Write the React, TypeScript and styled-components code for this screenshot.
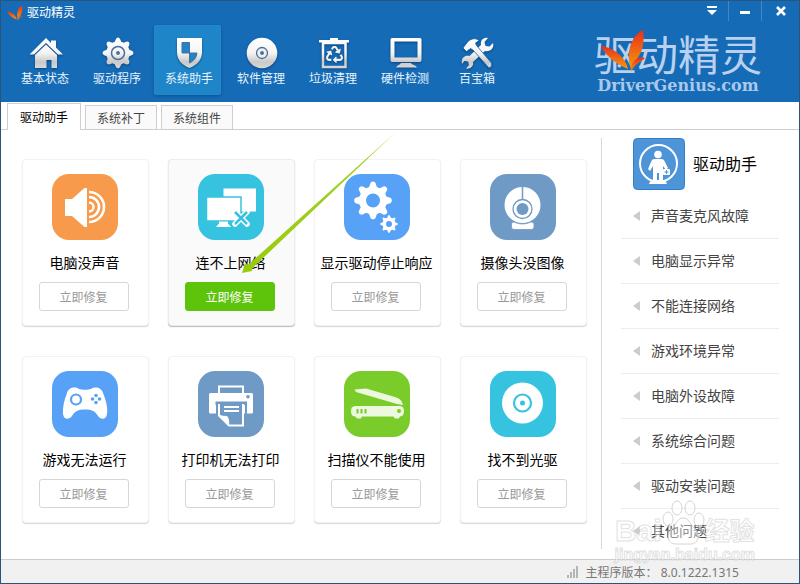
import React, { ReactNode, useState } from "react";
import styled, { createGlobalStyle } from "styled-components";
import { FaRecycle } from "react-icons/fa";

const GlobalStyle = createGlobalStyle`
  * { box-sizing: border-box; }
  body {
    margin: 0;
    font-family: "Noto Sans", "Noto Sans CJK SC", sans-serif;
    font-size: 12px;
    color: #000;
    background: #fff;
  }
  button { font: inherit; border: 0; padding: 0; background: none; cursor: pointer; }
`;

const AppWindow = styled.div`
  position: relative;
  display: flex;
  flex-direction: column;
  min-height: 100vh;
  border: 1px solid #2b5578;
  background: #fff;
`;

/* ---------- header ---------- */

const Header = styled.header`
  background: #156bb6;
  padding-bottom: 7px;
`;

const TitleBar = styled.div`
  display: flex;
  align-items: center;
  justify-content: space-between;
  height: 24px;
  padding-left: 6px;
`;

const AppTitle = styled.h1`
  display: flex;
  align-items: center;
  gap: 4px;
  margin: 0;
  font-size: 12px;
  line-height: 20px;
  font-weight: 400;
  color: #fff;
`;

const WindowControls = styled.div`
  display: flex;
  align-self: flex-start;
`;

const WindowButton = styled.button`
  display: flex;
  align-items: center;
  justify-content: center;
  width: 33px;
  height: 20px;

  & + & { border-left: 1px solid #4388c5; }
  &:last-child { width: 38px; }
`;

const HeaderBody = styled.div`
  display: flex;
  justify-content: space-between;
  padding: 0 37px 0 9px;
`;

const Nav = styled.nav`
  display: flex;
  gap: 5px;
`;

const NavButton = styled.button<{ $active: boolean }>`
  display: flex;
  flex-direction: column;
  align-items: center;
  width: 67px;
  height: 70px;
  padding: 11px 0 0 3px;
  border-radius: 3px;
  color: #e8f3fc;
  line-height: 18px;
  background: ${(p) => (p.$active ? "#1e85c9" : "transparent")};
  box-shadow: ${(p) => (p.$active ? "0 1px 3px rgba(0, 40, 90, 0.4), inset 0 0 1px #4aa6dd" : "none")};
`;

const NavIcon = styled.svg`
  width: 34px;
  height: 34px;
  overflow: visible;
  filter: drop-shadow(0 1px 1px rgba(0, 30, 70, 0.5));
`;

const Brand = styled.div`
  position: relative;
  display: flex;
  flex-direction: column;
  align-items: center;
  padding-top: 8px;
`;

const BrandName = styled.div`
  font-size: 42px;
  line-height: 44px;
  font-weight: 400;
  color: #b9d1ef;
`;

const BrandSite = styled.div`
  font-family: "DejaVu Serif", serif;
  font-size: 16px;
  line-height: 18px;
  font-weight: 700;
  color: #a9c8eb;
`;

const BrandLeaf = styled.div`
  position: absolute;
  left: 7px;
  top: 5px;
  line-height: 0;
`;

/* ---------- tabs ---------- */

const TabBar = styled.div`
  display: flex;
  align-items: flex-end;
  gap: 4px;
  padding: 1px 6px 0;
  border-bottom: 1px solid #cfcfcf;
`;

const Tab = styled.button<{ $active: boolean }>`
  height: ${(p) => (p.$active ? "27px" : "24px")};
  margin-bottom: ${(p) => (p.$active ? "-1px" : "0")};
  padding: 0 ${(p) => (p.$active ? "12px" : "11px")};
  border: 1px solid #cfcfcf;
  border-bottom: 0;
  background: ${(p) => (p.$active ? "#fff" : "#fafafa")};
  color: ${(p) => (p.$active ? "#000" : "#444")};
`;

/* ---------- content ---------- */

const Content = styled.main`
  display: flex;
  flex: 1;
`;

const CardGrid = styled.section`
  display: grid;
  flex: 1;
  grid-template-columns: repeat(4, 1fr);
  align-content: start;
  gap: 30px 19px;
  padding: 29px 14px 30px 21px;
`;

const Card = styled.article<{ $hot?: boolean }>`
  display: flex;
  flex-direction: column;
  align-items: center;
  padding: 14px 2px 14px 0;
  border: 1px solid ${(p) => (p.$hot ? "#ececec" : "#f2f2f2")};
  border-radius: 4px;
  background: ${(p) => (p.$hot ? "#fafafa" : "#fff")};
  box-shadow: 0 1px 1px ${(p) => (p.$hot ? "rgba(0, 0, 0, 0.28)" : "rgba(0, 0, 0, 0.16)")};
`;

const CardTitle = styled.h2`
  margin: 12px 0 8px;
  font-size: 14px;
  line-height: 22px;
  font-weight: 400;
  white-space: nowrap;
`;

const RepairButton = styled.button<{ $hot?: boolean }>`
  width: 90px;
  height: 29px;
  margin-right: 2px;
  border: 1px solid ${(p) => (p.$hot ? "#5dc40b" : "#d6d6d6")};
  border-radius: 3px;
  background: ${(p) => (p.$hot ? "#5dc40b" : "#fff")};
  color: ${(p) => (p.$hot ? "#fff" : "#999")};
`;

const Sidebar = styled.aside`
  width: 198px;
  margin: 8px 0 10px;
  padding: 0 20px 0 19px;
  border-left: 1px solid #d9d9d9;
`;

const SidebarHeader = styled.div`
  display: flex;
  align-items: center;
  gap: 8px;
  padding: 0 0 4px 12px;
`;

const SidebarTitle = styled.h2`
  margin: 0;
  font-size: 16px;
  line-height: 24px;
  font-weight: 400;
`;

const TopicList = styled.ul`
  margin: 0;
  padding: 0;
  list-style: none;
`;

const Topic = styled.li`
  padding: 12px 0 12px 12px;
  border-bottom: 1px solid #e9eef3;

  &:last-child { border-bottom: 0; padding-bottom: 6px; }
`;

const TopicLink = styled.a`
  display: flex;
  align-items: center;
  gap: 11px;
  font-size: 14px;
  line-height: 20px;
  color: #444;
  text-decoration: none;
`;

/* ---------- status bar and overlays ---------- */

const StatusBar = styled.footer`
  display: flex;
  align-items: center;
  justify-content: flex-end;
  gap: 8px;
  height: 24px;
  padding-right: 60px;
  border-top: 1px solid #ccc;
  background: #f1f1f1;
  color: #777;
`;

const Pointer = styled.svg`
  position: absolute;
  left: 239px;
  top: 129px;
  width: 158px;
  height: 144px;
  pointer-events: none;
`;

const Watermark = styled.div`
  position: absolute;
  right: 44px;
  bottom: 19px;
  color: rgba(255, 255, 255, 0.5);
  font-family: "Liberation Sans", "Noto Sans CJK SC", sans-serif;
  font-weight: 700;
  -webkit-text-stroke: 1px rgba(195, 195, 195, 0.5);
  pointer-events: none;
`;

const WatermarkLogo = styled.div`
  display: flex;
  align-items: center;
  justify-content: center;
  font-size: 30px;
  line-height: 30px;
`;

const WatermarkProduct = styled.span`
  font-size: 25px;
`;

const WatermarkPaw = styled.svg`
  width: 43px;
  height: 48px;
  margin-top: -18px;
`;

const WatermarkSite = styled.div`
  font-size: 16px;
  line-height: 18px;
  text-align: center;
`;

/* ---------- drawings ---------- */

function gearPath(cx: number, cy: number, outer: number, inner: number, teeth: number, hole = 0) {
  const step = (Math.PI * 2) / teeth;
  const at = (r: number, a: number) =>
    `${(cx + r * Math.sin(a)).toFixed(2)} ${(cy - r * Math.cos(a)).toFixed(2)}`;
  let d = "";
  for (let i = 0; i < teeth; i++) {
    const a = i * step;
    d += `${i ? "L" : "M"}${at(inner, a - step * 0.36)} L${at(outer - 1, a - step * 0.17)} Q${at(outer + 1, a)} ${at(outer - 1, a + step * 0.17)} L${at(inner, a + step * 0.36)} `;
  }
  d += "Z";
  if (hole) {
    d += ` M${cx - hole} ${cy} a${hole} ${hole} 0 1 0 ${hole * 2} 0 a${hole} ${hole} 0 1 0 ${-hole * 2} 0 Z`;
  }
  return d;
}

const Leaf = ({ id, width, height }: { id: string; width: number; height: number }) => (
  <svg width={width} height={height} viewBox="0 0 44 42" aria-hidden="true">
    <defs>
      <linearGradient id={id} x1="0" y1="0" x2="0" y2="1">
        <stop offset="0" stopColor="#e8301c" />
        <stop offset="1" stopColor="#f59a0c" />
      </linearGradient>
    </defs>
    <g fill={`url(#${id})`}>
      <path d="M0 16 C10 17 24 25 27 39 C17 35 5 27 0 16Z" />
      <path d="M42 0 C44 14 41 24 34 31 C32 33 31 36 30 39 C25 25 29 6 42 0Z" />
      <path d="M44 28 C37 26 29 31 30 42 C34 33 39 33 44 28Z" />
    </g>
  </svg>
);

const STEEL = "url(#steel)";
const NAVY = "#4a7099";

const SteelGradient = () => (
  <defs>
    <linearGradient id="steel" gradientUnits="userSpaceOnUse" x1="0" y1="2" x2="0" y2="32">
      <stop offset="0" stopColor="#fff" />
      <stop offset="0.5" stopColor="#f4f4f4" />
      <stop offset="0.8" stopColor="#c9c9c9" />
      <stop offset="1" stopColor="#d9d9d9" />
    </linearGradient>
  </defs>
);

const navItems: { label: string; icon: ReactNode }[] = [
  {
    label: "基本状态",
    icon: (
      <g fill={STEEL}>
        <path d="M18 2 L23 7 V4.5 H28 V11.5 L35 18.5 H30 L18 7 L6 18.5 H1.5Z" />
        <path d="M18 8.5 L29 19 V32 H23.5 V24 H18.5 V32 H7 V19Z" />
      </g>
    ),
  },
  {
    label: "驱动程序",
    icon: (
      <>
        <path d={gearPath(18, 17, 15.5, 11.8, 8)} fill={STEEL} />
        <circle cx="18" cy="17" r="6.5" fill="none" stroke={NAVY} strokeWidth="1.5" />
        <circle cx="18" cy="17" r="2.5" fill={NAVY} stroke="#fff" />
      </>
    ),
  },
  {
    label: "系统助手",
    icon: (
      <>
        <path d="M5 2 H30 V16 C30 24 25 29 17.5 32 C10 29 5 24 5 16Z" fill={STEEL} />
        <path
          d="M10 6.5 H17.5 V17 H10Z M17.5 17 H25 C24.5 22 21.5 25 17.5 27Z"
          fill="#1e85c9"
          stroke={NAVY}
          strokeWidth="1"
        />
      </>
    ),
  },
  {
    label: "软件管理",
    icon: (
      <>
        <circle cx="18" cy="17" r="15.3" fill={STEEL} />
        <circle cx="18" cy="17" r="5.5" fill="#eee" stroke={NAVY} strokeWidth="1.3" />
        <circle cx="18" cy="17" r="2.5" fill={NAVY} stroke="#fff" />
      </>
    ),
  },
  {
    label: "垃圾清理",
    icon: (
      <>
        <path d="M3 4 H14 V2 H22 V4 H33 V6.5 H3Z" fill={STEEL} />
        <path d="M7 7 H29.5 V31 H7Z" fill="none" stroke={STEEL} strokeWidth="2.5" />
        <FaRecycle x="10" y="10" size={17} color="#f0f0f0" />
      </>
    ),
  },
  {
    label: "硬件检测",
    icon: (
      <g fill={STEEL}>
        <path
          fillRule="evenodd"
          d="M4 2 H32 Q33.5 2 33.5 3.5 V24 Q33.5 26 32 26 H4 Q2.5 26 2.5 24 V3.5 Q2.5 2 4 2Z M6.5 5.5 V21.5 H29.5 V5.5Z"
        />
        <path d="M13 27 H23 C24 29 28 29 29 31.5 H8 C9 29 12 29 13 27Z" />
      </g>
    ),
  },
  {
    label: "百宝箱",
    icon: (
      <g fill={STEEL}>
        <path d="M28 2 L24.5 6 L25.500 10 L29.500 10.500 L33 7 C34.500 12.500 30 16 25 15 L13 26 C14 30.500 10 33.500 6 32.500 L9 29 L8 25.500 L4.500 25 L2 28 C0.500 22 5 18.500 9.500 20 L21 9 C20 4 24 1 28 2Z" />
        <path d="M3 12 L8 5.500 C12 2 16 2 19 4.500 L15.500 7 L16.500 9.500 L31.500 27 Q33 30.500 29 32 L13 14 L10.500 12.500 L6.500 15.500Z" stroke="#156bb6" strokeWidth="0.800" />
      </g>
    ),
  },
];

const cards: { title: string; color: string; art: ReactNode; hot?: boolean }[] = [
  {
    title: "电脑没声音",
    color: "#f79a4b",
    art: (
      <>
        <path d="M13 25 H20 L32.500 14 H35 V53 H32.500 L20 42 H13Z" fill="#fff" />
        <g fill="none" stroke="#fff" strokeWidth="2.600">
          <path d="M37 28.500 A4.500 4.500 0 0 1 37 37.500" />
          <path d="M37 23 A10 10 0 0 1 37 43" />
          <path d="M37 18 A15 15 0 0 1 37 48" />
        </g>
      </>
    ),
  },
  {
    title: "连不上网络",
    color: "#36c3e0",
    hot: true,
    art: (
      <>
        <path d="M25.500 14.500 H58 V37.500 H25.500Z" fill="#fff" />
        <path d="M8.500 23 H43 V47 H8.500Z" fill="#fff" stroke="#36c3e0" strokeWidth="1.500" />
        <path d="M21 47.500 H30 V49.500 L33 53 H18 L21 49.500Z" fill="#fff" />
        <path d="M37 38 L49 50 M49 38 L37 50" stroke="#fff" strokeWidth="5.500" strokeLinecap="round" />
        <path d="M37 38 L49 50 M49 38 L37 50" stroke="#36c3e0" strokeWidth="2.500" />
      </>
    ),
  },
  {
    title: "显示驱动停止响应",
    color: "#57a1f6",
    art: (
      <g fill="#fff" fillRule="evenodd">
        <path d={gearPath(29, 26.5, 19, 14, 8, 7)} />
        <path d={gearPath(45, 50, 9, 6.5, 8, 3)} />
      </g>
    ),
  },
  {
    title: "摄像头没图像",
    color: "#6f9ac5",
    art: (
      <>
        <circle cx="32.500" cy="31" r="18" fill="#fff" />
        <path d="M21.500 50 Q21.500 48 24 48 Q32.500 52 41 48 Q44 48 44 50 V53 Q44 55.500 41 55.500 H24 Q21.500 55.500 21.500 53Z" fill="#fff" stroke="#6f9ac5" strokeWidth="0.800" />
        <path d="M32.500 12 V25" stroke="#6f9ac5" strokeWidth="1.500" />
        <circle cx="32.500" cy="35" r="9.500" fill="#fff" stroke="#6f9ac5" strokeWidth="1.300" />
        <circle cx="32.500" cy="35" r="6" fill="#6f9ac5" />
      </>
    ),
  },
  {
    title: "游戏无法运行",
    color: "#57a1f6",
    art: (
      <>
        <path
          d="M15 22 C17 16 23 15.500 27 18 C30 19 36 19 39 18 C43 15.500 49 16 51 22 C54 29 56 37 55 43 C54 49 49 49 46 45 C43 40 40 38.500 33 38.500 C26 38.500 23 40 20 45 C17 49 12 49 11 43 C10.500 37 12 29 15 22Z"
          fill="#fff"
        />
        <circle cx="24" cy="28.500" r="5" fill="none" stroke="#57a1f6" strokeWidth="2.200" />
        <g fill="#57a1f6">
          <circle cx="44" cy="24.500" r="1.800" />
          <circle cx="44" cy="31.500" r="1.800" />
          <circle cx="40.500" cy="28" r="1.800" />
          <circle cx="47.500" cy="28" r="1.800" />
        </g>
      </>
    ),
  },
  {
    title: "打印机无法打印",
    color: "#6f9ac5",
    art: (
      <>
        <path d="M21 23 V15.500 H45 V23" fill="none" stroke="#fff" strokeWidth="2" />
        <rect x="11" y="22" width="44" height="20.500" rx="1.500" fill="#fff" />
        <circle cx="50" cy="25.800" r="1.800" fill="#6f9ac5" />
        <path d="M17.500 30.500 H49 V34 H17.500Z M18 34 H20 V43 H18Z M47 34 H49 V43 H47Z" fill="#6f9ac5" />
        <path d="M21 34 H45 V54.500 H31 L21 44.500Z" fill="#6f9ac5" stroke="#fff" strokeWidth="2" />
        <path d="M22 32 H44 V35 H22Z" fill="#6f9ac5" />
        <path d="M20 43.500 L31 55.500 Q32 48 29 45 Q25 45 20 43.500Z" fill="#fff" />
        <path d="M26 36 H41 M26 40 H41" stroke="#fff" strokeWidth="2" />
      </>
    ),
  },
  {
    title: "扫描仪不能使用",
    color: "#79cc2a",
    art: (
      <>
        <g fill="#ecf9de">
          <path d="M10.500 18.500 L22 17.500 L51 26 Q58 28 59 34 L53 33 L12 21Z" />
          <rect x="7" y="35" width="53" height="10.500" rx="4.500" />
          <path d="M11 45 H18 L17 47.500 H13Z M49 45 H56 L55 47.500 H51Z" />
        </g>
        <path d="M13.500 38 V42.500 M17.500 38 V42.500 M21.500 38 V42.500" stroke="#79cc2a" strokeWidth="2" />
        <circle cx="55" cy="40" r="2" fill="#79cc2a" />
      </>
    ),
  },
  {
    title: "找不到光驱",
    color: "#36c3e0",
    art: (
      <>
        <circle cx="32.500" cy="32" r="20.500" fill="#fff" />
        <circle cx="32.500" cy="32" r="8.500" fill="none" stroke="#36c3e0" strokeWidth="2.200" />
        <circle cx="32.500" cy="32" r="2.500" fill="#36c3e0" />
      </>
    ),
  },
];

const tabs = ["驱动助手", "系统补丁", "系统组件"];

const topics = [
  "声音麦克风故障",
  "电脑显示异常",
  "不能连接网络",
  "游戏环境异常",
  "电脑外设故障",
  "系统综合问题",
  "驱动安装问题",
  "其他问题",
];

const AssistantBadge = () => (
  <svg width="52" height="52" viewBox="0 0 52 52" aria-hidden="true">
    <rect x="0.500" y="0.500" width="51" height="51" rx="4" fill="#4d94d9" stroke="#2f7fcb" />
    <circle cx="25.500" cy="25.500" r="18.500" fill="none" stroke="#fff" strokeWidth="2" />
    <g fill="#fff">
      <circle cx="25" cy="16.500" r="3.800" />
      <path d="M21 21 H29 Q31 21 32 24 L35 30 L33 32 L30 28 V44 H26 V35 H24 V44 H20 V28 L17 33 L15 31 L18 24 Q19 21 21 21Z" />
      <path d="M16 46 Q17 42 21 42 H29 Q33 42 34 46Z" />
      <rect x="30" y="31" width="7" height="6" rx="1" />
    </g>
    <path d="M33.500 32 V36 M31.500 34 H35.500" stroke="#4d94d9" strokeWidth="1" />
  </svg>
);

export default function App() {
  const [activeNav, setActiveNav] = useState("系统助手");
  const [activeTab, setActiveTab] = useState(tabs[0]);

  return (
    <>
      <GlobalStyle />
      <AppWindow>
        <Header>
          <TitleBar>
            <AppTitle>
              <Leaf id="leaf-small" width={16} height={16} />
              驱动精灵
            </AppTitle>
            <WindowControls>
              <WindowButton aria-label="菜单">
                <svg width="10" height="10" viewBox="0 0 10 10" fill="#fff">
                  <path d="M0 0 H10 V2 H0Z M0 4 H10 L5 9Z" />
                </svg>
              </WindowButton>
              <WindowButton aria-label="最小化">
                <svg width="10" height="10" viewBox="0 0 10 10" fill="#fff">
                  <path d="M0 5 H10 V8 H0Z" />
                </svg>
              </WindowButton>
              <WindowButton aria-label="关闭">
                <svg width="10" height="10" viewBox="0 0 10 10" stroke="#fff" strokeWidth="2.600">
                  <path d="M1 1 L9 9 M9 1 L1 9" />
                </svg>
              </WindowButton>
            </WindowControls>
          </TitleBar>
          <HeaderBody>
            <Nav>
              {navItems.map((item) => (
                <NavButton
                  key={item.label}
                  $active={item.label === activeNav}
                  onClick={() => setActiveNav(item.label)}
                >
                  <NavIcon viewBox="0 0 34 34" aria-hidden="true">
                    <SteelGradient />
                    {item.icon}
                  </NavIcon>
                  {item.label}
                </NavButton>
              ))}
            </Nav>
            <Brand>
              <BrandName>驱动精灵</BrandName>
              <BrandSite>DriverGenius.com</BrandSite>
              <BrandLeaf>
                <Leaf id="leaf-large" width={44} height={42} />
              </BrandLeaf>
            </Brand>
          </HeaderBody>
        </Header>

        <TabBar role="tablist">
          {tabs.map((tab) => (
            <Tab
              key={tab}
              role="tab"
              aria-selected={tab === activeTab}
              $active={tab === activeTab}
              onClick={() => setActiveTab(tab)}
            >
              {tab}
            </Tab>
          ))}
        </TabBar>

        <Content>
          <CardGrid>
            {cards.map((card) => (
              <Card key={card.title} $hot={card.hot}>
                <svg width="66" height="66" viewBox="0 0 66 66" aria-hidden="true">
                  <rect width="66" height="66" rx="17" fill={card.color} />
                  {card.art}
                </svg>
                <CardTitle>{card.title}</CardTitle>
                <RepairButton $hot={card.hot} aria-label={`立即修复 ${card.title}`}>
                  立即修复
                </RepairButton>
              </Card>
            ))}
          </CardGrid>

          <Sidebar>
            <SidebarHeader>
              <AssistantBadge />
              <SidebarTitle>驱动助手</SidebarTitle>
            </SidebarHeader>
            <TopicList>
              {topics.map((topic) => (
                <Topic key={topic}>
                  <TopicLink href="#">
                    <svg width="7" height="10" viewBox="0 0 7 10" fill="#ccc" aria-hidden="true">
                      <path d="M7 0 V10 L0 5Z" />
                    </svg>
                    {topic}
                  </TopicLink>
                </Topic>
              ))}
            </TopicList>
          </Sidebar>
        </Content>

        <StatusBar>
          <svg width="11" height="12" viewBox="0 0 11 12" fill="#b5b5b5" aria-hidden="true">
            <path d="M0 9 H2 V12 H0Z M3 6 H5 V12 H3Z M6 3 H8 V12 H6Z M9 0 H11 V12 H9Z" />
          </svg>
          <span>主程序版本： 8.0.1222.1315</span>
        </StatusBar>

        <Pointer viewBox="0 0 158 144" aria-hidden="true">
          <defs>
            <linearGradient id="pointer" x1="1" y1="0" x2="0" y2="1">
              <stop offset="0" stopColor="#d9eba0" />
              <stop offset="0.2" stopColor="#a4d02a" />
              <stop offset="1" stopColor="#97cc08" />
            </linearGradient>
          </defs>
          <path d="M157 1 L12 138.500 L12 141 L2 143 L5 133.500 L8.500 134.500Z" fill="url(#pointer)" />
        </Pointer>

        <Watermark aria-hidden="true">
          <WatermarkLogo>
            Bai
            <WatermarkPaw viewBox="0 0 43 48" fill="#fff" fillOpacity="0.4" stroke="#d4d4d4">
              <ellipse cx="6" cy="21" rx="5" ry="7" />
              <ellipse cx="15" cy="10" rx="5" ry="7" />
              <ellipse cx="28" cy="10" rx="5" ry="7" />
              <ellipse cx="37" cy="22" rx="5" ry="7" />
              <path d="M21 20 C27 20 28 26 33 31 C39 37 36 46 29 46 C24 46 18 46 14 46 C6 46 4 38 9 32 C14 27 15 20 21 20Z" />
            </WatermarkPaw>
            <WatermarkProduct>经验</WatermarkProduct>
          </WatermarkLogo>
          <WatermarkSite>jingyan.baidu.com</WatermarkSite>
        </Watermark>
      </AppWindow>
    </>
  );
}
